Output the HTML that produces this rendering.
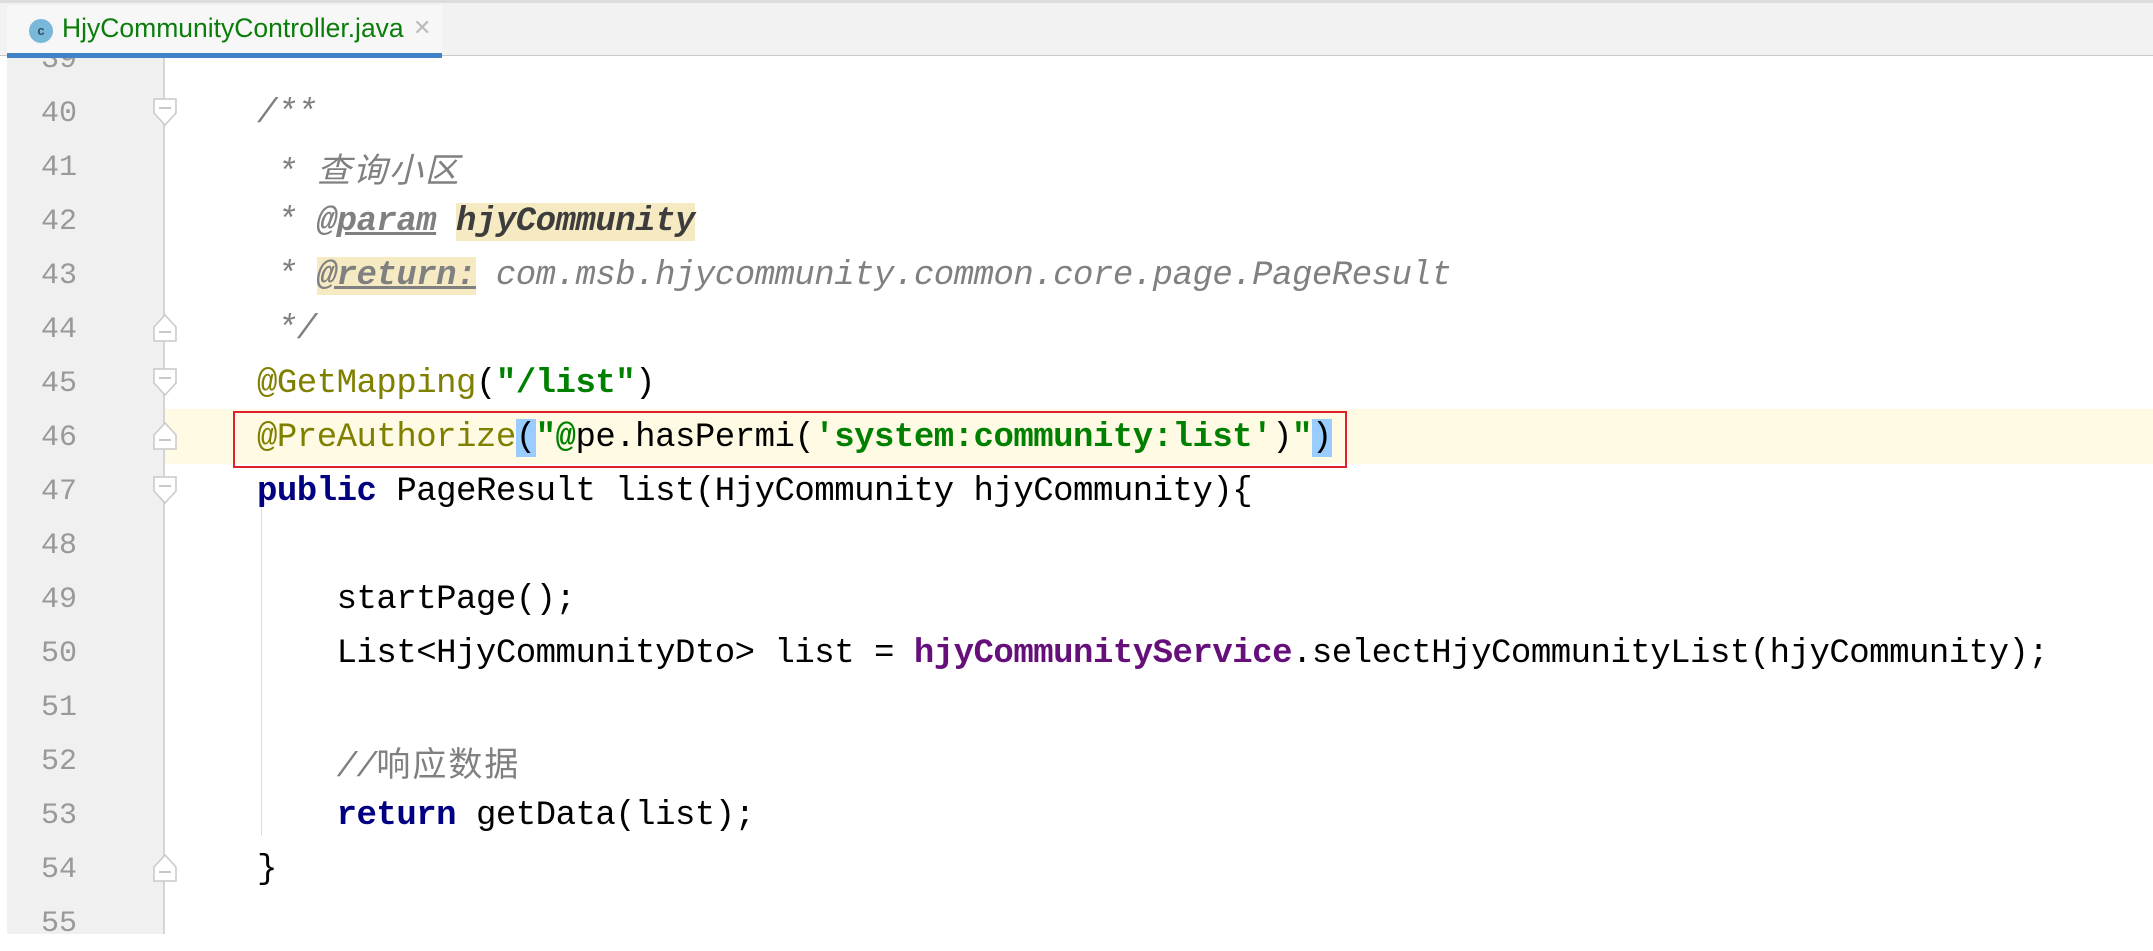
<!DOCTYPE html>
<html><head><meta charset="utf-8"><style>
body{margin:0;width:2153px;height:934px;overflow:hidden;background:#fff;position:relative;font-family:"Liberation Mono","Noto Sans CJK SC",monospace;}
#tabbar{position:absolute;left:0;top:0;width:2153px;height:56px;background:#f2f2f2;border-top:3px solid #dcdcdc;border-bottom:1px solid #c9c9c9;box-sizing:border-box;z-index:5}
#tab{position:absolute;left:7px;top:2px;width:435px;height:52px;background:#f7f7f7}
#tab .ul{position:absolute;left:0;bottom:-1px;width:435px;height:5px;background:#4083c9}
#tab .ic{position:absolute;left:22px;top:14px;width:24px;height:24px;border-radius:50%;background:#79b8d8;color:#2d4f64;font:bold 13px "Liberation Sans",sans-serif;text-align:center;line-height:24px}
#tab .t{position:absolute;left:55px;top:8px;font:26.5px "Liberation Sans",sans-serif;color:#0b7d0b}
#tab .x{position:absolute;left:406px;top:10px;font:22px "Liberation Sans",sans-serif;color:#bbb}
#gutter{position:absolute;left:7px;top:0;width:156px;height:934px;background:#f0f0f0;border-right:2px solid #d5d5d5}
#leftedge{position:absolute;left:0;top:0;width:7px;height:934px;background:#fff}
.hl{position:absolute;left:165px;top:409px;width:1988px;height:55px;background:#fffae3}
.ln{position:absolute;left:7px;width:70px;text-align:right;font-size:30px;color:#999;line-height:54px;height:54px;top:2px}
.cl{position:absolute;left:257px;font-size:34px;letter-spacing:-0.5px;line-height:54px;height:54px;white-space:pre;color:#000;margin-top:2px}
.cm{color:#808080;font-style:italic}
.tag{color:#808080;font-style:italic;font-weight:bold;text-decoration:underline;background:#f5eac1}
.tag2{color:#808080;font-style:italic;font-weight:bold;text-decoration:underline}
.pn{color:#3d3d3d;font-weight:bold;font-style:italic;background:#f5eac1}
.an{color:#808000}
.st{color:#008000;font-weight:bold}
.kw{color:#000080;font-weight:bold}
.fd{color:#660e7a;font-weight:bold}
.cjk{font-family:"Noto Sans CJK SC",sans-serif;font-size:34px;letter-spacing:2px}
.br{background:#99ccff}
#box{position:absolute;left:233px;top:411px;width:1110px;height:53px;border:2px solid #e0202a}
.guide{position:absolute;left:261px;top:496px;width:1px;height:340px;background:#dedede}
.fold{position:absolute;left:153px;width:24px;height:28px}
</style></head><body>
<div id="gutter"></div>
<div id="leftedge"></div>
<div class="hl"></div>
<div class="guide"></div>

<div class="ln" style="top:33px">39</div>
<div class="ln" style="top:87px">40</div>
<div class="ln" style="top:141px">41</div>
<div class="ln" style="top:195px">42</div>
<div class="ln" style="top:249px">43</div>
<div class="ln" style="top:303px">44</div>
<div class="ln" style="top:357px">45</div>
<div class="ln" style="top:411px">46</div>
<div class="ln" style="top:465px">47</div>
<div class="ln" style="top:519px">48</div>
<div class="ln" style="top:573px">49</div>
<div class="ln" style="top:627px">50</div>
<div class="ln" style="top:681px">51</div>
<div class="ln" style="top:735px">52</div>
<div class="ln" style="top:789px">53</div>
<div class="ln" style="top:843px">54</div>
<div class="ln" style="top:897px">55</div>

<svg class="fold" style="top:98px" viewBox="0 0 24 28"><path d="M1 1H23V15L12 27L1 15Z" fill="#fff" stroke="#c8c8c8" stroke-width="1.5"/><path d="M6 10H18" stroke="#c8c8c8" stroke-width="2"/></svg>
<svg class="fold" style="top:314px" viewBox="0 0 24 28"><path d="M1 27H23V13L12 1L1 13Z" fill="#fff" stroke="#c8c8c8" stroke-width="1.5"/><path d="M6 18H18" stroke="#c8c8c8" stroke-width="2"/></svg>
<svg class="fold" style="top:368px" viewBox="0 0 24 28"><path d="M1 1H23V15L12 27L1 15Z" fill="#fff" stroke="#c8c8c8" stroke-width="1.5"/><path d="M6 10H18" stroke="#c8c8c8" stroke-width="2"/></svg>
<svg class="fold" style="top:422px" viewBox="0 0 24 28"><path d="M1 27H23V13L12 1L1 13Z" fill="#fff" stroke="#c8c8c8" stroke-width="1.5"/><path d="M6 18H18" stroke="#c8c8c8" stroke-width="2"/></svg>
<svg class="fold" style="top:476px" viewBox="0 0 24 28"><path d="M1 1H23V15L12 27L1 15Z" fill="#fff" stroke="#c8c8c8" stroke-width="1.5"/><path d="M6 10H18" stroke="#c8c8c8" stroke-width="2"/></svg>
<svg class="fold" style="top:854px" viewBox="0 0 24 28"><path d="M1 27H23V13L12 1L1 13Z" fill="#fff" stroke="#c8c8c8" stroke-width="1.5"/><path d="M6 18H18" stroke="#c8c8c8" stroke-width="2"/></svg>

<div class="cl cm" style="top:85px">/**</div>
<div class="cl cm" style="top:139px"> * <span class="cjk">查询小区</span></div>
<div class="cl cm" style="top:193px"> * <span class="tag2">@param</span> <span class="pn">hjyCommunity</span></div>
<div class="cl cm" style="top:247px"> * <span class="tag">@return:</span> com.msb.hjycommunity.common.core.page.PageResult</div>
<div class="cl cm" style="top:301px"> */</div>
<div class="cl" style="top:355px"><span class="an">@GetMapping</span>(<span class="st">"/list"</span>)</div>
<div class="cl" style="top:409px"><span class="an">@PreAuthorize</span><span class="br">(</span><span class="st">"@</span>pe.hasPermi(<span class="st">'system:community:list'</span>)<span class="st">"</span><span class="br">)</span></div>
<div class="cl" style="top:463px"><span class="kw">public</span> PageResult list(HjyCommunity hjyCommunity){</div>
<div class="cl" style="top:571px">    startPage();</div>
<div class="cl" style="top:625px">    List&lt;HjyCommunityDto&gt; list = <span class="fd">hjyCommunityService</span>.selectHjyCommunityList(hjyCommunity);</div>
<div class="cl cm" style="top:733px">    //<span class="cjk" style="font-style:normal">响应数据</span></div>
<div class="cl" style="top:787px">    <span class="kw">return</span> getData(list);</div>
<div class="cl" style="top:841px">}</div>

<div id="box"></div>

<div id="tabbar"><div id="tab"><div class="ic">c</div><div class="t">HjyCommunityController.java</div><div class="x">✕</div><div class="ul"></div></div></div>
</body></html>
